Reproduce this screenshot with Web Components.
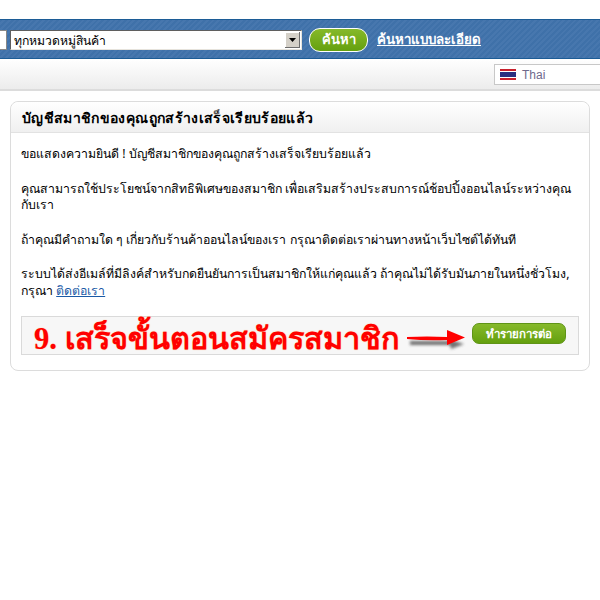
<!DOCTYPE html>
<html lang="th">
<head>
<meta charset="utf-8">
<title>Account created</title>
<style>
    html, body { margin: 0; padding: 0; background: #fff; }
    body { font-family: Tahoma, "Noto Sans", "DejaVu Sans", "Liberation Sans", sans-serif; color: #000; height: 600px; overflow: hidden; }
    a { color: #1a5aa6; }
</style>
</head>
<body>
<search-bar></search-bar>
<lang-bar></lang-bar>
<account-card heading="บัญชีสมาชิกของคุณถูกสร้างเสร็จเรียบร้อยแล้ว">
    <p>ขอแสดงความยินดี ! บัญชีสมาชิกของคุณถูกสร้างเสร็จเรียบร้อยแล้ว</p>
    <p>คุณสามารถใช้ประโยชน์จากสิทธิพิเศษของสมาชิก เพื่อเสริมสร้างประสบการณ์ช้อปปิ้งออนไลน์ระหว่างคุณ<br>กับเรา</p>
    <p>ถ้าคุณมีคำถามใด ๆ เกี่ยวกับร้านค้าออนไลน์ของเรา กรุณาติดต่อเราผ่านทางหน้าเว็บไซต์ได้ทันที</p>
    <p>ระบบได้ส่งอีเมล์ที่มีลิงค์สำหรับกดยืนยันการเป็นสมาชิกให้แก่คุณแล้ว ถ้าคุณไม่ได้รับมันภายในหนึ่งชั่วโมง,<br>กรุณา <a href="#">ติดต่อเรา</a></p>
    <step-banner slot="footer" label="9. เสร็จขั้นตอนสมัครสมาชิก" action="ทำรายการต่อ"></step-banner>
</account-card>

<script>
class SearchBar extends HTMLElement {
    constructor() {
        super();
        this.attachShadow({ mode: 'open' });
    }

    connectedCallback() {
        this.shadowRoot.innerHTML = `
        <style>
            :host {
                display: flex;
                align-items: center;
                box-sizing: border-box;
                margin-top: 19px;
                height: 40px;
                border-top: 1px solid #1c5c96;
                border-bottom: 1px solid #1c5c96;
                background: repeating-linear-gradient(135deg, #3f71a9 0 2px, #4777ae 2px 4px);
                color: #fff;
            }
            .keyword {
                box-sizing: border-box;
                width: 7px;
                height: 20px;
                margin-top: 2px;
                background: #fff;
                border: 1px solid #888;
                border-left: 0;
            }
            .select {
                box-sizing: border-box;
                display: flex;
                justify-content: space-between;
                align-items: center;
                width: 292px;
                height: 20px;
                margin: 2px 0 0 3px;
                padding: 0 0 0 3px;
                background: #fff;
                color: #000;
                border: 1px solid;
                border-color: #5f5f5f #e6e3dc #e6e3dc #5f5f5f;
                font-size: 12.2px;
            }
            .arrow {
                display: flex;
                align-items: center;
                justify-content: center;
                width: 15px;
                height: 16px;
                margin-right: 1px;
                background: #d4d0c8;
                box-shadow: inset -1px -1px 0 #6d6d6d, inset 1px 1px 0 #fff;
            }
            .arrow svg { display: block; }
            button {
                box-sizing: border-box;
                width: 59px;
                height: 24px;
                margin: 1px 0 0 7px;
                padding: 0;
                border: 1px solid #fff;
                border-radius: 11px;
                background: linear-gradient(#86b92a, #64a00f);
                color: #fff;
                font: bold 13px Tahoma, "Noto Sans", "DejaVu Sans", sans-serif;
            }
            a {
                margin-left: 9px;
                color: #fff;
                font-size: 13.3px;
                font-weight: bold;
            }
        </style>
        <div class="keyword"></div>
        <div class="select">
            <span>ทุกหมวดหมู่สินค้า</span>
            <span class="arrow"><svg width="7" height="4" viewBox="0 0 7 4"><path d="M0 0h7L3.5 4z" fill="#000"/></svg></span>
        </div>
        <button>ค้นหา</button>
        <a href="#">ค้นหาแบบละเอียด</a>
        `;
    }
}

class LangBar extends HTMLElement {
    constructor() {
        super();
        this.attachShadow({ mode: 'open' });
    }

    connectedCallback() {
        this.shadowRoot.innerHTML = `
        <style>
            :host {
                display: flex;
                justify-content: flex-end;
                box-sizing: border-box;
                height: 32px;
                padding-top: 5px;
                background: linear-gradient(#fff, #ececec);
                border-bottom: 2px solid #dcdcdc;
            }
            .lang {
                box-sizing: border-box;
                display: flex;
                align-items: center;
                gap: 6px;
                width: 106px;
                height: 21px;
                padding-left: 5px;
                background: #fff;
                border: 1px solid #c8c8c8;
                border-right: 0;
                color: #6f6a8c;
                font: 12px "Liberation Sans", Arial, sans-serif;
            }
            svg { display: block; }
        </style>
        <div class="lang">
            <svg width="16" height="11" viewBox="0 0 16 11">
                <rect width="16" height="11" fill="#fff"/>
                <rect width="16" height="2" fill="#c8202c"/>
                <rect y="9" width="16" height="2" fill="#c8202c"/>
                <rect y="3" width="16" height="5" fill="#2a2f80"/>
            </svg>
            <span>Thai</span>
        </div>
        `;
    }
}

class AccountCard extends HTMLElement {
    constructor() {
        super();
        this.attachShadow({ mode: 'open' });
    }

    connectedCallback() {
        this.shadowRoot.innerHTML = `
        <style>
            :host {
                display: block;
                box-sizing: border-box;
                height: 270px;
                margin: 10px 10px 0;
                border: 1px solid #dcdcdc;
                border-radius: 8px;
                font-size: 12.32px;
                color: #000;
            }
            h2 {
                margin: 0;
                box-sizing: border-box;
                height: 31px;
                padding: 7px 10px 0 11px;
                font-size: 14px;
                letter-spacing: .35px;
                line-height: 17px;
                border-bottom: 1px solid #e2e2e2;
                border-radius: 8px 8px 0 0;
                background: linear-gradient(#fff, #f0f0f0);
            }
            .body { padding: 13px 10px 0; }
            ::slotted(p) {
                margin: 0 0 18px;
                line-height: 16.5px;
            }
            ::slotted(step-banner) { margin-top: -1px; }
        </style>
        <h2>${this.getAttribute("heading")}</h2>
        <div class="body">
            <slot></slot>
            <slot name="footer"></slot>
        </div>
        `;
    }
}

class StepBanner extends HTMLElement {
    constructor() {
        super();
        this.attachShadow({ mode: 'open' });
    }

    connectedCallback() {
        this.shadowRoot.innerHTML = `
        <style>
            :host {
                display: flex;
                align-items: center;
                box-sizing: border-box;
                height: 39px;
                padding: 0 12px 4px 12px;
                background: #f7f7f7;
                border: 1px solid #dadada;
            }
            .label {
                flex: none;
                margin-top: 8px;
                color: #f00;
                font: bold 30.5px "Liberation Serif", "Noto Sans", "DejaVu Serif", serif;
                white-space: nowrap;
                text-shadow: 0 0 1px #ff9a5a;
            }
            svg { flex: none; display: block; margin: 13px 0 0 8px; }
            button {
                flex: none;
                box-sizing: border-box;
                width: 94px;
                height: 21px;
                margin-left: auto;
                padding: 0;
                border: 1px solid #5f9417;
                border-radius: 7px;
                background: linear-gradient(#86b92a, #64a00f);
                color: #fff;
                font: bold 11.5px Tahoma, "Noto Sans", "DejaVu Sans", sans-serif;
            }
        </style>
        <span class="label">${this.getAttribute("label")}</span>
        <svg width="62" height="24" viewBox="0 0 62 24">
            <defs><filter id="blur" x="-10%" y="-50%" width="120%" height="200%"><feGaussianBlur stdDeviation="1.6"/></filter></defs>
            <path d="M3 13h38v-2l16 5-13 5-1-4H3z" fill="#444" opacity=".75" filter="url(#blur)"/>
            <path d="M0 9q20-1 40 0V2l18 7.5L40 17v-5q-20 1-40-1z" fill="#f00"/>
        </svg>
        <button>${this.getAttribute("action")}</button>
        `;
    }
}

customElements.define("search-bar", SearchBar);
customElements.define("lang-bar", LangBar);
customElements.define("account-card", AccountCard);
customElements.define("step-banner", StepBanner);
</script>
</body>
</html>
